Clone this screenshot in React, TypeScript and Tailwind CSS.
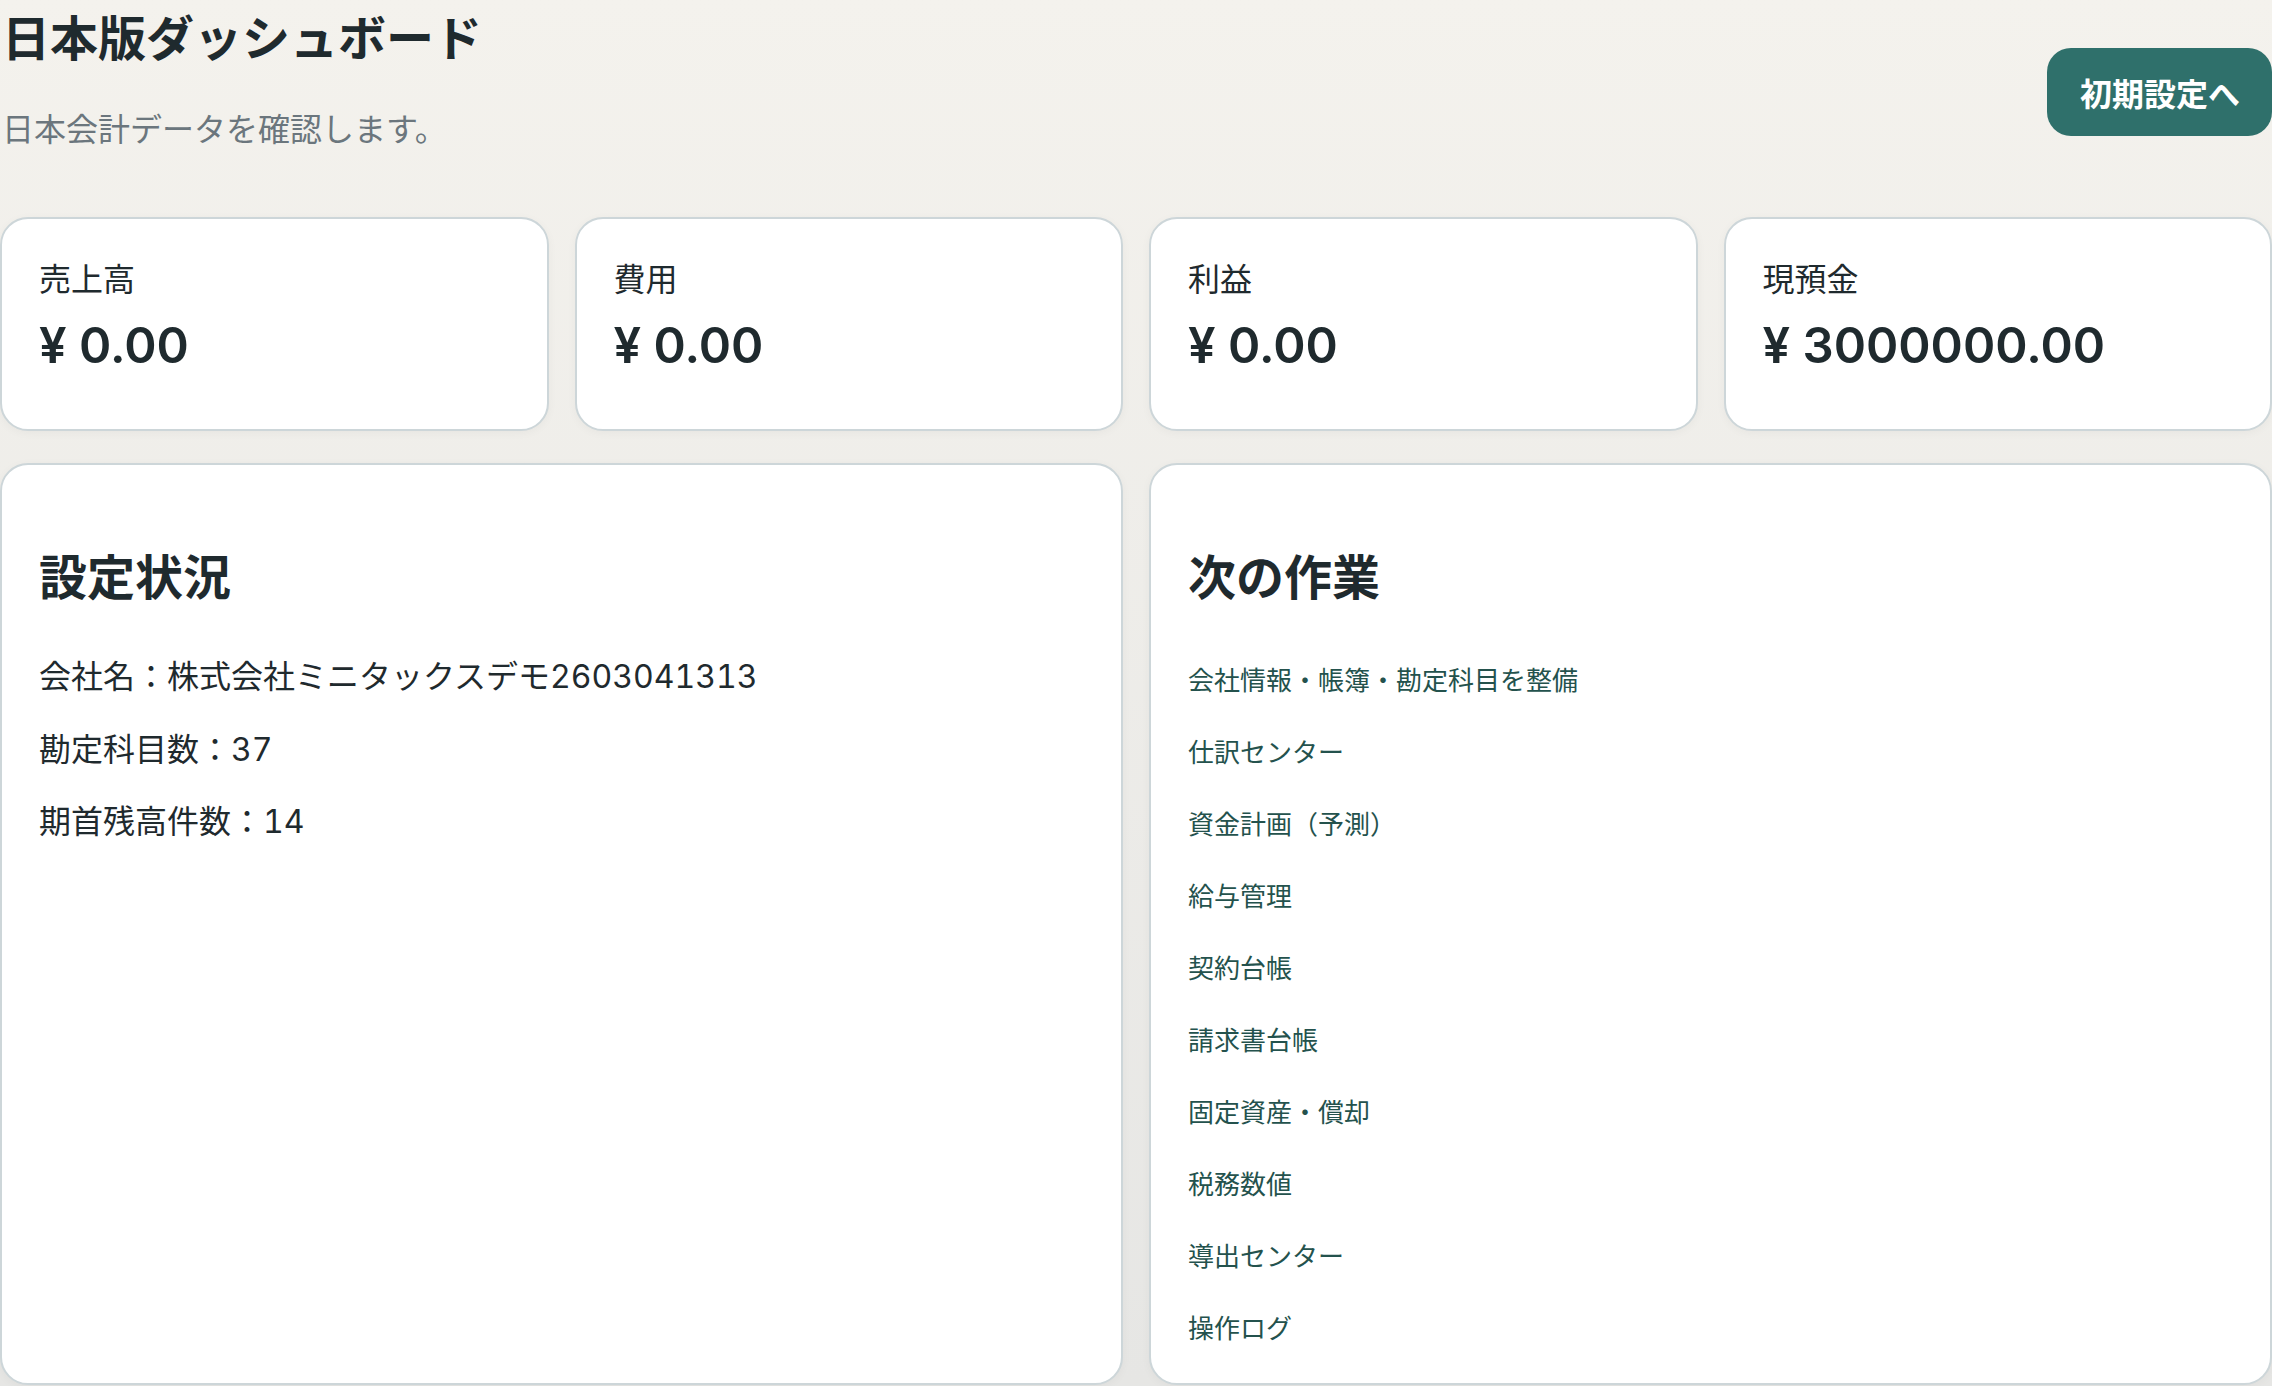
import React from "react";

const stats = [
  { label: "売上高", value: "¥ 0.00" },
  { label: "費用", value: "¥ 0.00" },
  { label: "利益", value: "¥ 0.00" },
  { label: "現預金", value: "¥ 3000000.00" },
];

const links = [
  "会社情報・帳簿・勘定科目を整備",
  "仕訳センター",
  "資金計画（予測）",
  "給与管理",
  "契約台帳",
  "請求書台帳",
  "固定資産・償却",
  "税務数値",
  "導出センター",
  "操作ログ",
];

export default function App() {
  return (
    <div className="min-h-screen w-full bg-linear-to-b from-[#f4f2ed] to-[#e6e6e4] font-['Inter','Noto_Sans_CJK_JP',sans-serif] text-[#1f2a2e]">
      <header className="flex items-start justify-between pt-[6px]">
        <div className="pl-[2px]">
          <h1 className="text-[48px] font-bold leading-[58px] font-['Noto_Sans_CJK_JP',sans-serif]">
            日本版ダッシュボード
          </h1>
          <p className="mt-[41px] text-[32px] leading-[45px] text-[#6b767d] font-['Noto_Sans_CJK_JP',sans-serif]">
            日本会計データを確認します。
          </p>
        </div>
        <button className="mt-[42px] h-[88px] rounded-[24px] bg-[#2f706b] pl-[33px] pr-[32px] text-[32px] font-bold text-white font-['Noto_Sans_CJK_JP',sans-serif]">
          初期設定へ
        </button>
      </header>

      <section className="mt-[67px] grid grid-cols-4 gap-[26px]">
        {stats.map((s) => (
          <div
            key={s.label}
            className="rounded-[28px] border-2 border-[#cdd6d9] bg-white px-[37px] pt-[36px] pb-[47px] shadow-[0_2px_10px_rgba(0,0,0,0.04)]"
          >
            <div className="text-[32px] leading-[45px] font-['Noto_Sans_CJK_JP',sans-serif]">{s.label}</div>
            <div className="mt-[10px] text-[49px] font-semibold leading-[72px]">{s.value}</div>
          </div>
        ))}
      </section>

      <section className="mt-[32px] grid grid-cols-2 gap-[26px]">
        <div className="rounded-[28px] border-2 border-[#cdd6d9] bg-white px-[37px] pt-[73px] pb-[37px] shadow-[0_2px_10px_rgba(0,0,0,0.04)]">
          <h2 className="text-[48px] font-bold leading-[72px] font-['Noto_Sans_CJK_JP',sans-serif]">設定状況</h2>
          <div className="mt-[44px] flex flex-col gap-[27.5px] text-[32px] leading-[45px] tabular-nums">
            <p>会社名：株式会社ミニタックスデモ2603041313</p>
            <p>勘定科目数：37</p>
            <p>期首残高件数：14</p>
          </div>
        </div>
        <div className="rounded-[28px] border-2 border-[#cdd6d9] bg-white px-[37px] pt-[73px] pb-[37px] shadow-[0_2px_10px_rgba(0,0,0,0.04)]">
          <h2 className="text-[48px] font-bold leading-[72px] font-['Noto_Sans_CJK_JP',sans-serif]">次の作業</h2>
          <div className="mt-[49px] flex flex-col gap-[33px]">
            {links.map((l) => (
              <a
                key={l}
                href="#"
                className="text-[26px] leading-[39px] text-[#24524d] font-['Noto_Sans_CJK_JP',sans-serif]"
              >
                {l}
              </a>
            ))}
          </div>
        </div>
      </section>
    </div>
  );
}
